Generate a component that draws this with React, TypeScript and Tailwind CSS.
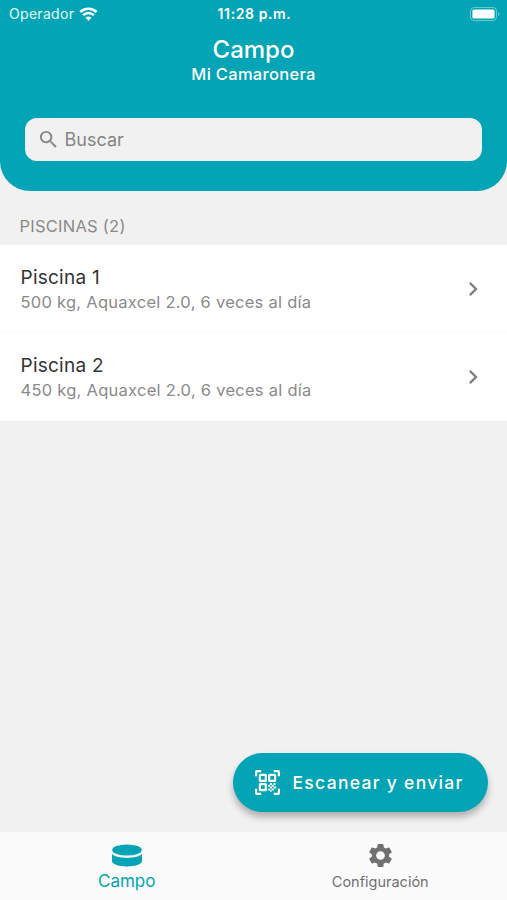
import { MdChevronRight, MdSearch, MdSettings } from 'react-icons/md';

interface Pool {
  id: number;
  name: string;
  feedKg: number;
  feedName: string;
  timesPerDay: number;
}

const pools: Pool[] = [
  { id: 1, name: 'Piscina 1', feedKg: 500, feedName: 'Aquaxcel 2.0', timesPerDay: 6 },
  { id: 2, name: 'Piscina 2', feedKg: 450, feedName: 'Aquaxcel 2.0', timesPerDay: 6 },
];

function WifiIcon() {
  return (
    <svg width="19" height="14" viewBox="0 0 18 14" fill="none" stroke="white" strokeWidth="2.5">
      <path d="M0.8 5C5.3 0.6 12.7 0.6 17.2 5" />
      <path d="M3.6 8.2C6.6 5.2 11.4 5.2 14.4 8.2" />
      <path d="M9 13.8L5.9 10.7C7.6 9.1 10.4 9.1 12.1 10.7Z" fill="white" stroke="none" />
    </svg>
  );
}

function BatteryIcon() {
  return (
    <svg width="30" height="14" viewBox="0 0 30 14" fill="none">
      <rect x="0.5" y="0.5" width="26" height="13" rx="3.5" stroke="white" strokeOpacity="0.4" />
      <rect x="2.4" y="2.4" width="22.2" height="9.2" rx="1.5" fill="white" />
      <path d="M28 5C29.8 5.6 29.8 8.4 28 9Z" fill="white" fillOpacity="0.4" />
    </svg>
  );
}

function QrScanIcon() {
  return (
    <svg width="25" height="25" viewBox="0 0 25 25" fill="none" stroke="currentColor" strokeWidth="2.2">
      <path d="M1.1 6.2V2Q1.1 1.1 2 1.1H6.2M18.8 1.1H23Q23.9 1.1 23.9 2V6.2M23.9 18.8V23Q23.9 23.9 23 23.9H18.8M6.2 23.9H2Q1.1 23.9 1.1 23V18.8" />
      <rect x="4.9" y="4.9" width="5.9" height="5.9" rx="0.4" />
      <rect x="14.2" y="4.9" width="5.9" height="5.9" rx="0.4" />
      <rect x="4.9" y="14.2" width="5.9" height="5.9" rx="0.4" />
      <g fill="currentColor" stroke="none">
        <path d="M15 13h2v2h-2zM18.6 13h2v2h-2zM13.2 14.8h2v2h-2zM16.8 14.8h2v2h-2z" />
        <path d="M15 16.6h2v2h-2zM18.6 16.6h2.6v2h-2.6zM13.2 18.4h2v2h-2zM16.8 18.4h2v2h-2zM15 20.2h2v1.4h-2z" />
      </g>
    </svg>
  );
}

function PoolIcon() {
  return (
    <svg width="30" height="23" viewBox="0 0 30 23" fill="currentColor">
      <ellipse cx="15" cy="6" rx="14.8" ry="5.6" />
      <path d="M0 9.8C3 15.3 27 15.3 30 9.8V17C30 24.2 0 24.2 0 17Z" />
    </svg>
  );
}

export default function App() {
  return (
    <div className="flex h-[900px] w-[507px] flex-col overflow-hidden bg-[#f1f1f1] font-['Inter',sans-serif]">
      <header className="h-[191px] shrink-0 rounded-b-[30px] bg-[#02a4b5] text-white">
        <div className="grid h-[27px] grid-cols-3 items-center pr-[7px] pl-[9px]">
          <div className="flex items-center gap-[5px]">
            <span className="text-[14px] tracking-[0.3px] text-white/90">Operador</span>
            <WifiIcon />
          </div>
          <span className="text-center text-[14px] font-semibold tracking-[0.6px]">11:28 p.m.</span>
          <div className="flex justify-end">
            <BatteryIcon />
          </div>
        </div>
        <h1 className="mt-[9px] text-center text-[24px] leading-[28px] font-medium">Campo</h1>
        <p className="text-center text-[16.5px] leading-[20px] font-medium tracking-[0.3px]">Mi Camaronera</p>
        <div className="mx-[25px] mt-[34px] flex h-[43px] items-center rounded-[12px] bg-[#f1f1f1] pl-[12px] text-[#858585]">
          <MdSearch size={23} />
          <span className="ml-[4.5px] text-[18px]">Buscar</span>
        </div>
      </header>

      <main className="flex-1">
        <h2 className="flex h-[54px] items-end pb-[8px] pl-[19.5px] text-[16.5px] leading-[22px] tracking-[0.25px] text-[#8a8a8a]">
          PISCINAS ({pools.length})
        </h2>
        <ul className="bg-white">
          {pools.map((pool) => (
            <li
              key={pool.id}
              className="flex h-[88px] items-center justify-between border-b border-[#fafafa] pr-[20px] pl-[20.5px]"
            >
              <div>
                <p className="pt-px text-[19px] leading-[26px] tracking-[0.25px] text-[#333333]">{pool.name}</p>
                <p className="text-[16.5px] leading-[23px] tracking-[0.26px] text-[#8a8a8a]">
                  {pool.feedKg} kg, {pool.feedName}, {pool.timesPerDay} veces al día
                </p>
              </div>
              <MdChevronRight size={28} className="text-[#808080]" />
            </li>
          ))}
        </ul>
      </main>

      <div className="flex justify-end pr-[19px] pb-[20px]">
        <button className="flex h-[59px] w-[255px] items-center rounded-full bg-[#02a4b5] pl-[22px] text-white shadow-[0_5px_7px_rgba(0,0,0,0.28)]">
          <QrScanIcon />
          <span className="ml-[12.5px] pt-px text-[17.5px] font-medium tracking-[1.3px]">Escanear y enviar</span>
        </button>
      </div>

      <nav className="grid h-[68px] shrink-0 grid-cols-2 bg-[#fbfbfb]">
        <div className="flex flex-col items-center pt-[12px] text-[#02a4b5]">
          <PoolIcon />
          <span className="mt-[4px] text-[17px] leading-[20px]">Campo</span>
        </div>
        <div className="flex flex-col items-center pt-[9px] text-[#717171]">
          <MdSettings size={29} />
          <span className="mt-[2px] text-[14.5px] leading-[20px]">Configuración</span>
        </div>
      </nav>
    </div>
  );
}
